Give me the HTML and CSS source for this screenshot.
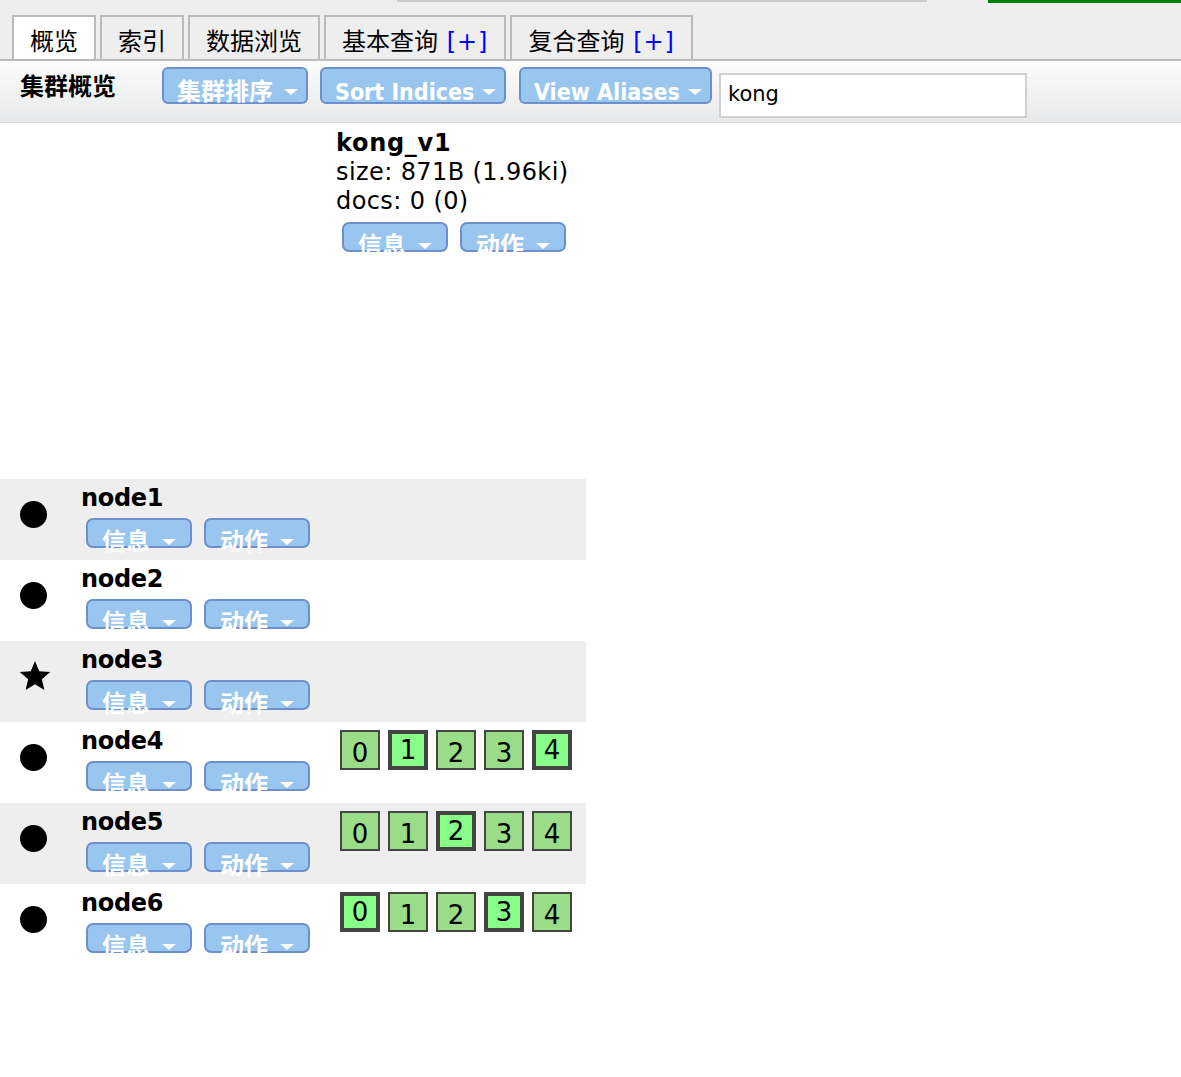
FILE: index.html
```html
<!DOCTYPE html>
<html lang="zh">
<head>
<meta charset="utf-8">
<title>elasticsearch-head</title>
<link rel="stylesheet" href="styles.css">
</head>
<body>
<div class="top">
  <div class="strip"><span class="strip-gray"></span><span class="strip-green"></span></div>
  <div class="tabs">
    <div class="tab active">概览</div>
    <div class="tab">索引</div>
    <div class="tab">数据浏览</div>
    <div class="tab">基本查询 <span class="plus">[+]</span></div>
    <div class="tab">复合查询 <span class="plus">[+]</span></div>
  </div>
</div>
<div class="toolbar">
  <div class="tb-title">集群概览</div>
  <div class="btn big b1"><span class="lbl">集群排序</span><span class="arrow"></span></div>
  <div class="btn big b2"><span class="lbl">Sort Indices</span><span class="arrow"></span></div>
  <div class="btn big b3"><span class="lbl">View Aliases</span><span class="arrow"></span></div>
  <div class="filter">kong</div>
</div>

<div class="table">
  <div class="row head">
    <div class="cell"></div>
    <div class="cell idx">
      <div class="idx-name">kong_v1</div>
      <div class="line">size: 871B (1.96ki)</div>
      <div class="line">docs: 0 (0)</div>
      <div class="btns idx-btns">
        <div class="btn sm"><span class="lbl">信息</span><span class="arrow"></span></div>
        <div class="btn sm"><span class="lbl">动作</span><span class="arrow"></span></div>
      </div>
    </div>
  </div>

  <div class="row alt">
    <div class="cell node">
      <div class="icon"><span class="dot"></span></div>
      <div class="info">
        <div class="node-name">node1</div>
        <div class="btns">
          <div class="btn sm"><span class="lbl">信息</span><span class="arrow"></span></div>
          <div class="btn sm"><span class="lbl">动作</span><span class="arrow"></span></div>
        </div>
      </div>
    </div>
    <div class="cell"></div>
  </div>

  <div class="row">
    <div class="cell node">
      <div class="icon"><span class="dot"></span></div>
      <div class="info">
        <div class="node-name">node2</div>
        <div class="btns">
          <div class="btn sm"><span class="lbl">信息</span><span class="arrow"></span></div>
          <div class="btn sm"><span class="lbl">动作</span><span class="arrow"></span></div>
        </div>
      </div>
    </div>
    <div class="cell"></div>
  </div>

  <div class="row alt">
    <div class="cell node">
      <div class="icon"><svg class="star" width="32" height="30" viewBox="0 0 30 28"><polygon points="15,0 18.97,9.55 29.27,10.36 21.42,17.08 23.82,27.14 15,21.75 6.18,27.14 8.58,17.08 0.73,10.36 11.03,9.55" fill="#000"/></svg></div>
      <div class="info">
        <div class="node-name">node3</div>
        <div class="btns">
          <div class="btn sm"><span class="lbl">信息</span><span class="arrow"></span></div>
          <div class="btn sm"><span class="lbl">动作</span><span class="arrow"></span></div>
        </div>
      </div>
    </div>
    <div class="cell"></div>
  </div>

  <div class="row">
    <div class="cell node">
      <div class="icon"><span class="dot"></span></div>
      <div class="info">
        <div class="node-name">node4</div>
        <div class="btns">
          <div class="btn sm"><span class="lbl">信息</span><span class="arrow"></span></div>
          <div class="btn sm"><span class="lbl">动作</span><span class="arrow"></span></div>
        </div>
      </div>
    </div>
    <div class="cell shards">
      <div class="shard">0</div>
      <div class="shard primary">1</div>
      <div class="shard">2</div>
      <div class="shard">3</div>
      <div class="shard primary">4</div>
    </div>
  </div>

  <div class="row alt">
    <div class="cell node">
      <div class="icon"><span class="dot"></span></div>
      <div class="info">
        <div class="node-name">node5</div>
        <div class="btns">
          <div class="btn sm"><span class="lbl">信息</span><span class="arrow"></span></div>
          <div class="btn sm"><span class="lbl">动作</span><span class="arrow"></span></div>
        </div>
      </div>
    </div>
    <div class="cell shards">
      <div class="shard">0</div>
      <div class="shard">1</div>
      <div class="shard primary">2</div>
      <div class="shard">3</div>
      <div class="shard">4</div>
    </div>
  </div>

  <div class="row">
    <div class="cell node">
      <div class="icon"><span class="dot"></span></div>
      <div class="info">
        <div class="node-name">node6</div>
        <div class="btns">
          <div class="btn sm"><span class="lbl">信息</span><span class="arrow"></span></div>
          <div class="btn sm"><span class="lbl">动作</span><span class="arrow"></span></div>
        </div>
      </div>
    </div>
    <div class="cell shards">
      <div class="shard primary">0</div>
      <div class="shard">1</div>
      <div class="shard">2</div>
      <div class="shard primary">3</div>
      <div class="shard">4</div>
    </div>
  </div>
</div>
</body>
</html>
```

FILE: styles.css
```css
html, body {
  margin: 0;
  padding: 0;
  background: #fff;
}
body {
  font-family: "DejaVu Sans", "Noto Sans CJK SC", sans-serif;
  font-size: 24px;
  line-height: 29px;
  color: #000;
}

/* top area */
.top {
  background: #eee;
  height: 59px;
}
.strip {
  display: flex;
  height: 3px;
}
.strip-gray {
  display: block;
  margin-left: 397px;
  width: 530px;
  height: 2px;
  background: #ccc;
}
.strip-green {
  display: block;
  margin-left: 61px;
  flex: 1;
  height: 3px;
  background: #008000;
}
.tabs {
  display: flex;
  gap: 4px;
  margin-top: 12px;
  padding-left: 12px;
}
.tab {
  box-sizing: border-box;
  height: 44px;
  border: 2px solid #bbb;
  border-bottom: none;
  padding: 11px 16px 0;
  line-height: 29px;
  background: #eee;
  white-space: nowrap;
}
.tab.active {
  background: #fff;
}
.plus {
  color: #00f;
  letter-spacing: 1px;
  margin-left: 1px;
}

/* toolbar */
.toolbar {
  display: flex;
  align-items: flex-start;
  height: 61px;
  border-top: 2px solid #bbb;
  border-bottom: 1px solid #ddd;
  background: linear-gradient(#fcfcfc, #e8e9ea);
}
.tb-title {
  width: 142px;
  padding-left: 20px;
  margin-top: 12px;
  font-weight: bold;
  white-space: nowrap;
  flex-shrink: 0;
}

/* buttons */
.btn {
  display: flex;
  align-items: flex-start;
  box-sizing: border-box;
  border: 2px solid #6d8fcb;
  border-radius: 6px;
  background: #99c6ee;
  color: #fff;
  font-weight: bold;
  white-space: nowrap;
  flex-shrink: 0;
}
.btn .lbl {
  line-height: 24px;
}
.arrow {
  display: block;
  width: 0;
  height: 0;
  border-left: 7px solid transparent;
  border-right: 7px solid transparent;
  border-top: 6px solid #fff;
}
.btn.big {
  height: 37px;
  margin-top: 6px;
  padding: 11px 0 0 13px;
  font-family: "DejaVu Sans Condensed", "DejaVu Sans", "Noto Sans CJK SC", sans-serif;
  font-stretch: condensed;
  font-size: 23px;
}
.btn.big .arrow {
  margin-top: 9px;
  margin-left: auto;
  margin-right: 8px;
}
.btn.b1 {
  width: 146px;
}
.btn.b1 .lbl {
  font-size: 24px;
}
.btn.b2 {
  width: 186px;
  margin-left: 12px;
}
.btn.b3 {
  width: 193px;
  margin-left: 13px;
}
.filter {
  box-sizing: border-box;
  width: 308px;
  height: 45px;
  margin-top: 12px;
  margin-left: 7px;
  border: 2px solid #d0d0d0;
  background: #fff;
  padding: 5px 0 0 7px;
  font-size: 21px;
  line-height: 29px;
}

.btn.sm {
  width: 106px;
  height: 30px;
  padding: 10px 0 0 14px;
  font-size: 24px;
  border-radius: 7px;
}
.btn.sm .arrow {
  margin-top: 9px;
  margin-left: 12px;
}

/* table */
.table {
  width: 586px;
}
.row {
  display: grid;
  grid-template-columns: 336px 250px;
  box-sizing: border-box;
  height: 81px;
  padding-top: 5px;
}
.row.alt {
  background: #eee;
}
.row.head {
  height: 356px;
  padding-top: 6px;
}
.idx-name, .node-name {
  font-weight: bold;
  white-space: nowrap;
}
.idx-name {
  letter-spacing: 0.7px;
}
.node-name {
  letter-spacing: -0.3px;
}
.line {
  white-space: nowrap;
  letter-spacing: 0.4px;
}
.btns {
  display: flex;
  gap: 12px;
  margin-left: 5px;
  margin-top: 5px;
}
.idx-btns {
  margin-left: 6px;
  margin-top: 6px;
}
.node {
  display: flex;
}
.icon {
  width: 81px;
  flex-shrink: 0;
}
.dot {
  display: block;
  width: 27px;
  height: 27px;
  border-radius: 50%;
  background: #000;
  margin-left: 20px;
  margin-top: 17px;
}
.star {
  display: block;
  margin-left: 19px;
  margin-top: 15px;
}

/* shards */
.shards {
  display: flex;
  align-items: flex-start;
  gap: 8px;
  padding-left: 4px;
  padding-top: 3px;
}
.shard {
  box-sizing: border-box;
  width: 40px;
  height: 40px;
  border: 2px solid #444;
  background: #99dd88;
  text-align: center;
  font-size: 26px;
  line-height: 30px;
  padding-top: 6px;
}
.shard.primary {
  border-width: 4px;
  background: #88ff88;
  line-height: 32px;
  padding-top: 0;
}
```
